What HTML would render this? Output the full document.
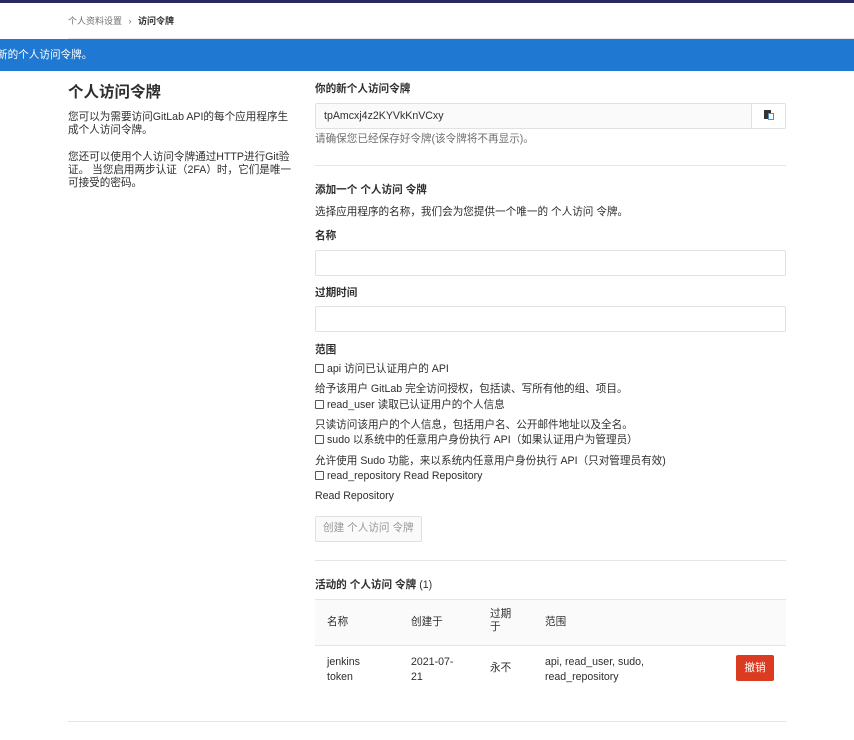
<!DOCTYPE html>
<html><head><meta charset="utf-8"><style>
*{margin:0;padding:0;box-sizing:border-box}
body{width:854px;height:740px;overflow:hidden;background:#fff;font-family:"Liberation Sans","Noto Sans CJK SC",sans-serif;font-size:10.6px;color:#2e2e2e;position:relative}
.a{position:absolute;white-space:nowrap;line-height:13px}
.b{font-weight:bold}
.g{color:#707070}
.box{position:absolute;border:1px solid #e1e1e1;border-radius:2px;background:#fff}
.hr{position:absolute;height:1px;background:#e5e5e5}
.cb{display:inline-block;width:9px;height:9px;border:1px solid #555;border-radius:1px;vertical-align:-1px;margin-right:3px}
</style></head><body>
<div style="position:absolute;left:0;top:0;width:854px;height:3px;background:#292961"></div>
<div class="a" style="left:68px;top:15px;font-size:9px;color:#707070">个人资料设置 <span style="margin:0 4px">›</span> <b style="color:#2e2e2e">访问令牌</b></div>
<div class="hr" style="left:68px;top:38px;width:786px"></div>
<div style="position:absolute;left:0;top:39px;width:854px;height:32px;background:#1f78d1"></div>
<div class="a" style="left:-3px;top:49px;color:#fff">新的个人访问令牌。</div>

<div class="a b" style="left:68px;top:83px;font-size:15.5px;line-height:20px">个人访问令牌</div>
<div class="a" style="left:68px;top:111px">您可以为需要访问GitLab API的每个应用程序生<br>成个人访问令牌。</div>
<div class="a" style="left:68px;top:151px">您还可以使用个人访问令牌通过HTTP进行Git验<br>证。 当您启用两步认证（2FA）时，它们是唯一<br>可接受的密码。</div>

<div class="a b" style="left:315px;top:83px">你的新个人访问令牌</div>
<div class="box" style="left:315px;top:103px;width:471px;height:26px;background:#fafafa"></div>
<div class="box" style="left:751px;top:103px;width:35px;height:26px"></div>
<div style="position:absolute;left:764px;top:110px;width:7px;height:9px;background:#333"></div>
<div style="position:absolute;left:768px;top:113px;width:6px;height:7px;background:#fff;border:1px solid #4a90d9"></div>
<div class="a" style="left:324px;top:110px">tpAmcxj4z2KYVkKnVCxy</div>
<div class="a g" style="left:315px;top:133px">请确保您已经保存好令牌(该令牌将不再显示)。</div>
<div class="hr" style="left:315px;top:165px;width:471px"></div>

<div class="a b" style="left:315px;top:184px">添加一个 个人访问 令牌</div>
<div class="a" style="left:315px;top:206px">选择应用程序的名称，我们会为您提供一个唯一的 个人访问 令牌。</div>
<div class="a b" style="left:315px;top:230px">名称</div>
<div class="box" style="left:315px;top:250px;width:471px;height:26px"></div>
<div class="a b" style="left:315px;top:287px">过期时间</div>
<div class="box" style="left:315px;top:306px;width:471px;height:26px"></div>
<div class="a b" style="left:315px;top:344px">范围</div>
<div class="a" style="left:315px;top:363px"><span class="cb"></span>api 访问已认证用户的 API</div>
<div class="a" style="left:315px;top:383px">给予该用户 GitLab 完全访问授权，包括读、写所有他的组、项目。</div>
<div class="a" style="left:315px;top:399px"><span class="cb"></span>read_user 读取已认证用户的个人信息</div>
<div class="a" style="left:315px;top:419px">只读访问该用户的个人信息，包括用户名、公开邮件地址以及全名。</div>
<div class="a" style="left:315px;top:434px"><span class="cb"></span>sudo 以系统中的任意用户身份执行 API（如果认证用户为管理员）</div>
<div class="a" style="left:315px;top:455px">允许使用 Sudo 功能，来以系统内任意用户身份执行 API（只对管理员有效)</div>
<div class="a" style="left:315px;top:470px"><span class="cb"></span>read_repository Read Repository</div>
<div class="a" style="left:315px;top:490px">Read Repository</div>
<div class="box" style="left:315px;top:516px;width:107px;height:26px;background:#fafafa"></div>
<div class="a" style="left:323px;top:522px;color:#999">创建 个人访问 令牌</div>
<div class="hr" style="left:315px;top:560px;width:471px"></div>

<div class="a b" style="left:315px;top:579px">活动的 个人访问 令牌 <span style="font-weight:normal">(1)</span></div>
<div style="position:absolute;left:315px;top:599px;width:471px;height:47px;background:#fafafa;border-top:1px solid #e5e5e5;border-bottom:1px solid #e5e5e5"></div>
<div class="a" style="left:327px;top:616px">名称</div>
<div class="a" style="left:411px;top:616px">创建于</div>
<div class="a" style="left:490px;top:608px">过期<br>于</div>
<div class="a" style="left:545px;top:616px">范围</div>
<div class="a" style="left:327px;top:655px;line-height:15px">jenkins<br>token</div>
<div class="a" style="left:411px;top:655px;line-height:15px">2021-07-<br>21</div>
<div class="a" style="left:490px;top:662px">永不</div>
<div class="a" style="left:545px;top:655px;line-height:15px">api, read_user, sudo,<br>read_repository</div>
<div style="position:absolute;left:736px;top:655px;width:38px;height:26px;background:#db3b21;border-radius:2px;color:#fff;text-align:center;line-height:26px">撤销</div>
<div class="hr" style="left:68px;top:721px;width:718px"></div>
</body></html>
